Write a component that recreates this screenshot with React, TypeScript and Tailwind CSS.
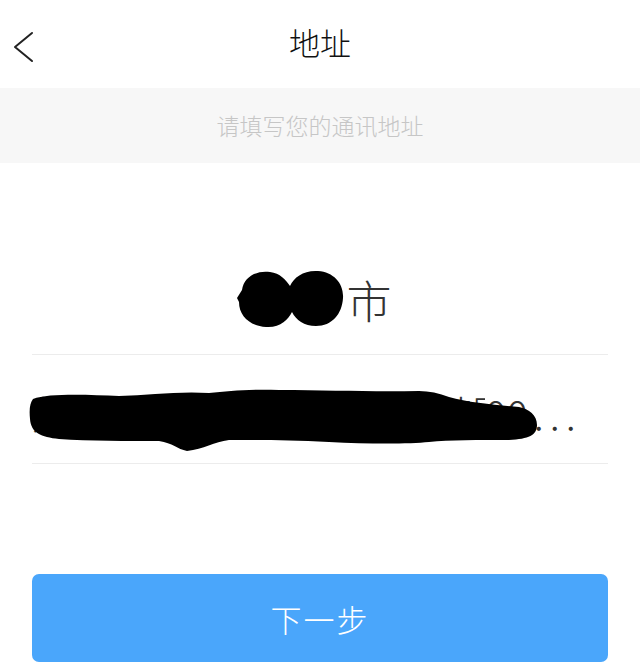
const FONT = "font-['Noto_Sans_CJK_SC','Noto_Sans',sans-serif]";

// Thin back chevron, drawn to match the nav bar glyph
function BackChevron() {
  return (
    <svg
      width="24"
      height="32"
      viewBox="0 0 24 32"
      className="absolute left-[12px] top-[31px]"
      fill="none"
      stroke="#222"
      strokeWidth="2"
      strokeLinecap="round"
      strokeLinejoin="round"
    >
      <polyline points="20,2 3,16 20,30" />
    </svg>
  );
}

// Hand-drawn redaction blob over the city name
function CityScribble() {
  return (
    <svg width="110" height="62" viewBox="0 0 110 62" className="shrink-0">
      <path
        d="M6 22 C8 8 22 2 34 4 C44 5 50 12 54 18 C58 9 68 2 82 3 C98 4 108 16 107 30 C106 46 96 58 80 58 C68 58 60 52 56 44 C52 52 44 60 30 59 C14 58 3 48 3 34 L1 30 Z"
        fill="#000"
      />
    </svg>
  );
}

// Long redaction scribble over the street address
function AddressScribble() {
  return (
    <svg
      width="512"
      height="72"
      viewBox="0 0 512 72"
      className="absolute left-[29px] top-[32px]"
    >
      <path
        d="M4 12 C20 6 60 8 90 9 C120 8 150 4 180 6 C200 4 220 2 250 3 C300 3 340 5 390 4 C400 4 410 6 420 10 C440 16 470 18 490 20 C500 22 508 28 508 38 C508 48 500 52 480 53 C450 53 420 53 400 55 C380 57 340 57 300 55 C260 53 230 53 200 53 C185 55 175 62 158 64 C148 62 144 56 130 54 C100 54 60 54 30 52 C12 50 2 46 1 32 C0 22 1 16 4 12 Z"
        fill="#000"
      />
    </svg>
  );
}

export default function App() {
  return (
    <div className={`w-[640px] h-[665px] bg-white flex flex-col font-light ${FONT}`}>
      {/* Nav bar */}
      <div className="relative h-[88px] flex items-center justify-center shrink-0">
        <BackChevron />
        <span className="text-[31px] text-[#111] leading-none -mt-[6px]">地址</span>
      </div>

      {/* Hint band */}
      <div className="h-[75px] bg-[#f7f7f7] flex items-center justify-center shrink-0">
        <span className="text-[23px] text-[#c6c6c6] leading-none">请填写您的通讯地址</span>
      </div>

      {/* City */}
      <div className="h-[191px] flex items-end justify-center pb-[24px] shrink-0">
        <div className="flex items-center pr-[12px]">
          <CityScribble />
          <span className="text-[45px] text-[#333] leading-none">市</span>
        </div>
      </div>

      <div className="mx-8 h-px bg-[#ececec]" />

      {/* Address */}
      <div className="relative h-[108px] flex items-center px-8 pt-[8px] shrink-0">
        <div className="flex items-baseline whitespace-nowrap text-[40px] text-[#333] leading-none">
          <span className="w-[453px] overflow-hidden">某某省某某市某某区某某路某某号</span>
          <span>00</span>
          <span className="tracking-[6px] ml-[6px]">...</span>
        </div>
        <AddressScribble />
      </div>

      <div className="mx-8 h-px bg-[#ececec]" />

      {/* Next button */}
      <div className="flex-1 flex items-end px-8 pb-[3px]">
        <button className="w-full h-[88px] rounded-[7px] bg-[#4aa6fb] flex items-center justify-center">
          <span className="text-[31px] text-white leading-none tracking-[2px]">下一步</span>
        </button>
      </div>
    </div>
  );
}
